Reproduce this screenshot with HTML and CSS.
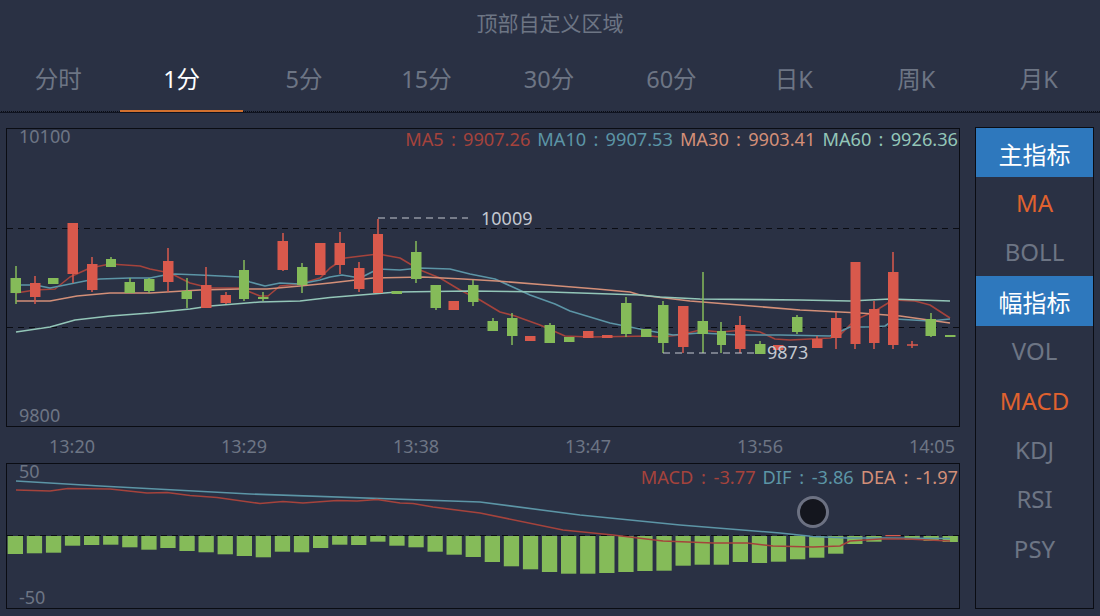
FILE: index.html
```html
<!DOCTYPE html>
<html lang="zh-CN">
<head>
<meta charset="utf-8">
<title>K线图</title>
<link rel="stylesheet" href="styles.css">
</head>
<body>
<header class="title">顶部自定义区域</header>
<nav class="tabs">
  <a class="tab">分时</a>
  <a class="tab active">1分</a>
  <a class="tab">5分</a>
  <a class="tab">15分</a>
  <a class="tab">30分</a>
  <a class="tab">60分</a>
  <a class="tab">日K</a>
  <a class="tab">周K</a>
  <a class="tab">月K</a>
</nav>
<main class="main">
  <section class="charts">
    <div class="chart chart-k">
      <svg class="plot" viewBox="7 129 952 297" aria-hidden="true">
        <path class="grid" d="M7 228.500H959M7 327.500H959"/>
        <polyline class="line ma5" points="16,293 35,290 55,289 70,277 90,268 110,264 140,266 150,269 170,273 190,283 210,288 240,288 260,296 268,296 280,286 300,284 320,278 330,268 345,258 378,254 400,258 420,270 440,278 460,290 480,300 500,312 515,316 540,325 565,336 590,337 650,336 660,337 680,335 700,330 720,332 745,330 760,332 775,339 790,340 830,338 840,335 855,320 875,311 893,300 915,301 930,305 950,318"/>
        <polyline class="line ma10" points="16,285 35,285 50,288 70,284 90,280 100,279 130,278 150,278 165,275 175,274 200,275 240,277 250,282 265,286 280,283 300,284 320,280 330,277 342,275 360,278 378,269 400,270 420,268 450,269 470,274 495,279 515,288 530,295 555,304 570,311 590,317 610,323 630,327 650,331 673,335 700,333 740,335 780,335 830,336 850,327 870,327 885,326 895,319 930,321 950,319"/>
        <polyline class="line ma30" points="16,301 50,301 77,296 110,293 150,293 200,290 240,289 267,289 300,286 330,283 373,278 423,277 463,279 497,281 547,285 597,289 630,292 640,295 690,301 800,310 860,313 900,316 950,323"/>
        <polyline class="line ma60" points="16,332 50,327 75,320 110,316 150,313 190,309 210,306 260,302 300,301 330,297.500 397,292 470,291 550,292 640,295 660,297 700,299 800,300 850,301 870,300 890,299 950,301"/>
        <path class="wick up" d="M73 274V283M35 276V304M92 257V292M168 248V292M206 267V285M226 292V304M283 233V271M340 232V274M359 262V292M378 219V234M683 347V353M740 316V353M817 336V348M836 312V349M855 344V349M874 301V349M893 252V349M907 345H918M912 341V348"/>
        <path class="wick down" d="M16 266V304M111 257V259M130 278V282M149 278V293M187 278V308M244 260V301M263 292V301M258 298H268M302 263V293M416 241V283M436 308V310M473 280V306M493 318V321M512 313V345M550 323V325M626 297V337M663 301V353M703 272V353M721 322V353M760 341V344M797 315V334M931 313V337"/>
        <g class="body up">
          <rect x="30" y="283" width="10.500" height="14"/><rect x="67.500" y="223" width="10.500" height="51"/><rect x="87" y="264" width="10.500" height="26"/><rect x="163" y="261" width="10.500" height="21"/><rect x="201" y="285" width="10.500" height="23"/><rect x="220.500" y="295" width="10.500" height="8"/><rect x="277.500" y="241" width="10.500" height="29"/><rect x="315" y="243" width="10.500" height="32"/><rect x="334.500" y="243" width="10.500" height="22"/><rect x="354" y="268" width="10.500" height="21"/><rect x="373" y="234" width="10" height="59"/><rect x="448.500" y="301" width="10.500" height="9"/><rect x="525" y="336" width="10.500" height="5"/><rect x="583" y="331" width="10.500" height="7"/><rect x="602" y="335" width="10.500" height="3"/><rect x="678" y="306" width="10.500" height="41"/><rect x="735" y="325" width="10.500" height="24"/><rect x="773" y="345" width="10.500" height="5"/><rect x="812" y="339" width="10.500" height="9"/><rect x="831" y="318" width="10.500" height="20"/><rect x="850.500" y="262" width="10" height="82"/><rect x="869" y="309" width="10.500" height="34"/><rect x="888" y="272" width="10.500" height="73"/>
        </g>
        <g class="body down">
          <rect x="10.500" y="278" width="10.500" height="15"/><rect x="48" y="278" width="10.500" height="6"/><rect x="106" y="259" width="10" height="8"/><rect x="124.500" y="282" width="10.500" height="11"/><rect x="144" y="279" width="10.500" height="12"/><rect x="181.500" y="291" width="10.500" height="8"/><rect x="239" y="270" width="10" height="29"/><rect x="258" y="297" width="10.500" height="2"/><rect x="297" y="267" width="10.500" height="18"/><rect x="391.500" y="291" width="10.500" height="3"/><rect x="411" y="252" width="10.500" height="27"/><rect x="430.500" y="285" width="10.500" height="23"/><rect x="468" y="285" width="10.500" height="17"/><rect x="487.500" y="321" width="10.500" height="10"/><rect x="507" y="318" width="10.500" height="18"/><rect x="544.500" y="325" width="10.500" height="18"/><rect x="564" y="337" width="10.500" height="5"/><rect x="621" y="303" width="10.500" height="31"/><rect x="641" y="329" width="10.500" height="8"/><rect x="658" y="305" width="10.500" height="38"/><rect x="697.500" y="321" width="10.500" height="13"/><rect x="717" y="331" width="9" height="14"/><rect x="755" y="344" width="10.500" height="10"/><rect x="792" y="317" width="10.500" height="15"/><rect x="925.500" y="319" width="10.500" height="17"/><rect x="945" y="335" width="10.500" height="2"/>
        </g>
        <path class="mark" d="M378 218H468M663 353H757"/>
        <text class="note" x="481" y="225">10009</text>
        <text class="note" x="767" y="359">9873</text>
      </svg>
      <span class="axis-label top">10100</span>
      <span class="axis-label bottom">9800</span>
      <div class="legend">
        <span class="c-ma5">MA5 : 9907.26</span>
        <span class="c-ma10">MA10 : 9907.53</span>
        <span class="c-ma30">MA30 : 9903.41</span>
        <span class="c-ma60">MA60 : 9926.36</span>
      </div>
    </div>
    <div class="times">
      <span>13:20</span><span>13:29</span><span>13:38</span><span>13:47</span><span>13:56</span><span>14:05</span>
    </div>
    <div class="chart chart-sub">
      <svg class="plot" viewBox="7 464 952 144" aria-hidden="true">
        <path class="grid" d="M7 535.500H959"/>
        <g class="body down">
          <rect x="7.700" y="536" width="15.300" height="18"/><rect x="26.800" y="536" width="15.300" height="17.300"/><rect x="45.900" y="536" width="15.300" height="16.700"/><rect x="64.900" y="536" width="15.300" height="9.700"/><rect x="84" y="536" width="15.300" height="9"/><rect x="103.100" y="536" width="15.300" height="8.700"/><rect x="122.200" y="536" width="15.300" height="11.300"/><rect x="141.300" y="536" width="15.300" height="13.700"/><rect x="160.300" y="536" width="15.300" height="12"/><rect x="179.400" y="536" width="15.300" height="15"/><rect x="198.500" y="536" width="15.300" height="16.300"/><rect x="217.600" y="536" width="15.300" height="18.300"/><rect x="236.700" y="536" width="15.300" height="20"/><rect x="255.700" y="536" width="15.300" height="21.300"/><rect x="274.800" y="536" width="15.300" height="15.700"/><rect x="293.900" y="536" width="15.300" height="16.300"/><rect x="313" y="536" width="15.300" height="12"/><rect x="332.100" y="536" width="15.300" height="8.700"/><rect x="351.100" y="536" width="15.300" height="9"/><rect x="370.200" y="536" width="15.300" height="5.700"/><rect x="389.300" y="536" width="15.300" height="9.700"/><rect x="408.400" y="536" width="15.300" height="11.300"/><rect x="427.500" y="536" width="15.300" height="15.700"/><rect x="446.500" y="536" width="15.300" height="18.700"/><rect x="465.600" y="536" width="15.300" height="21"/><rect x="484.700" y="536" width="15.300" height="26"/><rect x="503.800" y="536" width="15.300" height="30.300"/><rect x="522.900" y="536" width="15.300" height="33.300"/><rect x="541.900" y="536" width="15.300" height="36"/><rect x="561" y="536" width="15.300" height="37.700"/><rect x="580.100" y="536" width="15.300" height="37.700"/><rect x="599.200" y="536" width="15.300" height="37"/><rect x="618.300" y="536" width="15.300" height="36"/><rect x="637.300" y="536" width="15.300" height="35"/><rect x="656.400" y="536" width="15.300" height="34.700"/><rect x="675.500" y="536" width="15.300" height="29.700"/><rect x="694.600" y="536" width="15.300" height="28.700"/><rect x="713.700" y="536" width="15.300" height="28.700"/><rect x="732.700" y="536" width="15.300" height="26"/><rect x="751.800" y="536" width="15.300" height="27"/><rect x="770.900" y="536" width="15.300" height="25.700"/><rect x="790" y="536" width="15.300" height="23.300"/><rect x="809.100" y="536" width="15.300" height="21.700"/><rect x="828.100" y="536" width="15.300" height="17.700"/><rect x="847.200" y="536" width="15.300" height="8"/><rect x="866.300" y="536" width="15.300" height="5.700"/><rect x="904.500" y="536" width="15.300" height="3.700"/><rect x="923.500" y="536" width="15.300" height="5"/><rect x="942.600" y="536" width="15.300" height="6"/>
        </g>
        <g class="body up"><rect x="885.400" y="535" width="15.300" height="1.200"/></g>
        <polyline class="line ma10" points="16,481 100,486 250,494 480,502 580,515 680,525 780,533 813,536.500 847,538 880,538 950,538.500"/>
        <polyline class="line ma5" points="16,490 50,491 68,488.500 110,489 147,493 167,492.500 190,495.500 217,497.500 260,503.500 283,501.500 303,503 337,500.500 357,501 377,499.500 400,503 413,503.500 433,507 480,513 563,530 613,535 663,541 713,543 747,543 773,546 813,547 840,546 850,541 880,539 907,539 950,541"/>
      </svg>
      <span class="axis-label top">50</span>
      <span class="axis-label bottom">-50</span>
      <div class="legend">
        <span class="c-ma5">MACD : -3.77</span>
        <span class="c-ma10">DIF : -3.86</span>
        <span class="c-ma30">DEA : -1.97</span>
      </div>
      <span class="pointer"></span>
    </div>
  </section>
  <aside class="side">
    <div class="side-item head">主指标</div>
    <div class="side-item on">MA</div>
    <div class="side-item">BOLL</div>
    <div class="side-item head">幅指标</div>
    <div class="side-item">VOL</div>
    <div class="side-item on">MACD</div>
    <div class="side-item">KDJ</div>
    <div class="side-item">RSI</div>
    <div class="side-item">PSY</div>
  </aside>
</main>
</body>
</html>
```
FILE: styles.css
```css
html, body {
  margin: 0;
  padding: 0;
}
body {
  width: 1100px;
  height: 616px;
  overflow: hidden;
  background: #2a3144;
  color: #6d7584;
  font-family: "Noto Sans", "Noto Sans CJK SC", sans-serif;
}
.title {
  height: 48px;
  line-height: 46px;
  text-align: center;
  font-size: 21px;
  color: #6d7584;
}
.tabs {
  display: flex;
  width: 1103px;
  margin-left: -3px;
  height: 63px;
  border-bottom: 1px dotted #0b0d14;
  box-shadow: 0 1px 0 #0f1320;
}
.tab {
  flex: 1;
  line-height: 63px;
  text-align: center;
  font-size: 23.500px;
  color: #6d7584;
}
.tab.active {
  color: #fff;
  height: 64px;
  box-sizing: border-box;
  margin-left: 1px;
  border-bottom: 2px solid #d2702e;
}
.main {
  display: flex;
  padding: 16px 6px 0;
  gap: 15px;
}
.charts {
  width: 954px;
  display: flex;
  flex-direction: column;
}
.chart {
  position: relative;
  box-sizing: border-box;
  border: 1px solid #0a0c13;
}
.chart-k {
  height: 299px;
}
.chart-sub {
  height: 146px;
}
.plot {
  display: block;
  width: 100%;
  height: 100%;
}
.times {
  height: 36px;
  display: flex;
  justify-content: space-between;
  align-items: center;
  padding: 1px 5px 0 43px;
  box-sizing: border-box;
  font-size: 18px;
  line-height: 20px;
  color: #6d7584;
}
.grid {
  fill: none;
  stroke: #0a0c13;
  stroke-width: 1;
  stroke-dasharray: 6 5;
}
.wick {
  fill: none;
  stroke-width: 1.500;
}
.wick.up {
  stroke: #d9594c;
}
.wick.down {
  stroke: #85bb59;
}
.body.up {
  fill: #d9594c;
}
.body.down {
  fill: #85bb59;
}
.line {
  fill: none;
  stroke-width: 1.600;
  stroke-linejoin: round;
}
.ma5 {
  stroke: #a5433c;
}
.ma10 {
  stroke: #5c95a6;
}
.ma30 {
  stroke: #d38f78;
}
.ma60 {
  stroke: #93c6b8;
}
.mark {
  fill: none;
  stroke: #c3c8d0;
  stroke-width: 1;
  stroke-dasharray: 7 5;
}
.note {
  font-size: 18px;
  fill: #c3c8d0;
}
.axis-label {
  position: absolute;
  left: 12px;
  font-size: 18px;
  line-height: 20px;
  color: #6d7584;
}
.axis-label.top {
  top: -3px;
}
.axis-label.bottom {
  bottom: 1px;
}
.legend {
  position: absolute;
  top: 0;
  right: 1px;
  display: flex;
  gap: 7px;
  font-size: 18.200px;
  line-height: 20px;
  word-spacing: 2.500px;
  white-space: nowrap;
}
.chart-sub .legend {
  top: 3px;
  word-spacing: 3px;
}
.c-ma5 {
  color: #a5433c;
}
.c-ma10 {
  color: #5c95a6;
}
.c-ma30 {
  color: #d38f78;
}
.c-ma60 {
  color: #93c6b8;
}
.pointer {
  position: absolute;
  left: 790px;
  top: 32px;
  width: 26px;
  height: 26px;
  border: 3px solid #6c7182;
  border-radius: 50%;
  background: #14161e;
}
.side {
  width: 119px;
  height: 482px;
  margin-top: -1px;
  box-sizing: border-box;
  border: 1px solid #0a0c13;
  display: flex;
  flex-direction: column;
}
.side-item {
  flex: none;
  height: 49.400px;
  padding-top: 1px;
  box-sizing: border-box;
  display: flex;
  align-items: center;
  justify-content: center;
  font-size: 24px;
  color: #6d7584;
}
.side-item.head {
  background: #2e78bd;
  color: #fff;
}
.side-item.on {
  color: #e0622f;
}
```
